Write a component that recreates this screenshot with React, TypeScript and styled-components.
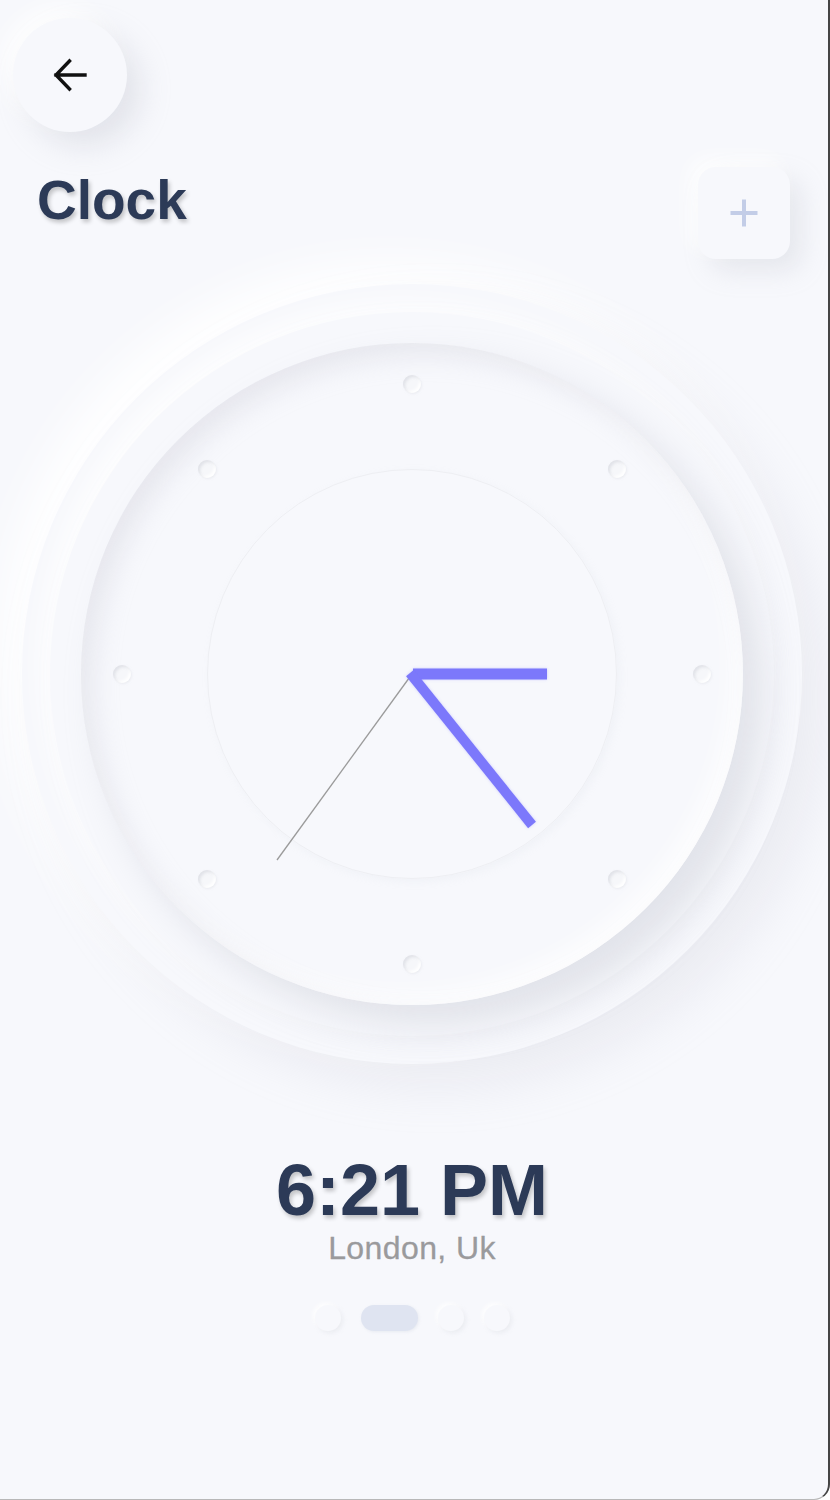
import React from 'react'
import styled, { createGlobalStyle } from 'styled-components'

const GlobalStyle = createGlobalStyle`
  html, body {
    margin: 0;
    padding: 0;
    background: #ffffff;
  }
  * {
    box-sizing: border-box;
  }
`

const FACE = 662
const CENTER = FACE / 2
const TICK_RADIUS = 290
const TICK_SIZE = 18

const Screen = styled.div`
  width: 830px;
  height: 1500px;
  background: #f7f8fc;
  border-right: 2px solid #454545;
  border-bottom: 1px solid #b8b8b8;
  border-bottom-right-radius: 16px;
  display: flex;
  flex-direction: column;
  overflow: hidden;
  font-family: 'Liberation Sans', Arial, sans-serif;
`

const Header = styled.div`
  padding: 18px 0 0 13px;
`

const BackButton = styled.button`
  width: 114px;
  height: 114px;
  border: none;
  border-radius: 50%;
  background: #f7f8fc;
  display: flex;
  align-items: center;
  justify-content: center;
  padding: 0;
  box-shadow: 14px 14px 30px rgba(180, 182, 195, 0.3),
    -10px -10px 24px rgba(255, 255, 255, 0.9);
`

const TitleRow = styled.div`
  margin-top: 35px;
  display: flex;
  justify-content: space-between;
  align-items: flex-start;
  padding: 0 38px 0 37px;
`

const Title = styled.h1`
  margin: 6px 0 0;
  font-size: 55px;
  line-height: 1;
  font-weight: 700;
  color: #2c3a57;
  text-shadow: 2px 3px 4px rgba(0, 0, 0, 0.22);
`

const AddButton = styled.button`
  width: 92px;
  height: 92px;
  border: none;
  border-radius: 18px;
  background: #f7f8fc;
  display: flex;
  align-items: center;
  justify-content: center;
  padding: 0;
  box-shadow: 12px 12px 26px rgba(180, 182, 195, 0.25),
    -8px -8px 20px rgba(255, 255, 255, 0.9);
`

const ClockStage = styled.div`
  margin-top: 25px;
  padding-right: 4px;
  display: flex;
  justify-content: center;
`

const OuterDisc = styled.div`
  width: 780px;
  height: 780px;
  border-radius: 50%;
  display: flex;
  align-items: center;
  justify-content: center;
  background: #f7f8fc;
  box-shadow: 24px 24px 48px rgba(190, 192, 205, 0.2),
    -22px -22px 46px rgba(255, 255, 255, 0.95);
`

const MidRing = styled.div`
  width: 724px;
  height: 724px;
  border-radius: 50%;
  display: flex;
  align-items: center;
  justify-content: center;
  background: #f7f8fc;
  box-shadow: 8px 8px 24px rgba(190, 192, 205, 0.08),
    -10px -10px 24px rgba(255, 255, 255, 0.8);
`

const Face = styled.div`
  position: relative;
  width: ${FACE}px;
  height: ${FACE}px;
  border-radius: 50%;
  display: flex;
  align-items: center;
  justify-content: center;
  background: #f7f8fc;
  box-shadow: 20px 20px 36px rgba(175, 178, 192, 0.3),
    inset 12px 12px 26px rgba(190, 192, 205, 0.28),
    inset -10px -10px 24px rgba(255, 255, 255, 0.85);
`

const InnerRing = styled.div`
  width: 410px;
  height: 410px;
  border-radius: 50%;
  border: 1.5px solid #eeeff3;
  box-shadow: 3px 3px 8px rgba(200, 202, 212, 0.12);
`

const Tick = styled.span<{ $x: number; $y: number }>`
  position: absolute;
  left: ${({ $x }) => $x}px;
  top: ${({ $y }) => $y}px;
  width: ${TICK_SIZE}px;
  height: ${TICK_SIZE}px;
  border-radius: 50%;
  background: #f6f7fa;
  box-shadow: inset 2px 2px 3px rgba(200, 202, 210, 0.45),
    inset -2px -2px 3px rgba(255, 255, 255, 0.95),
    1px 1px 2px rgba(225, 227, 234, 0.5);
`

const Hands = styled.svg`
  position: absolute;
  inset: 0;
  overflow: visible;
`

const TimeBlock = styled.div`
  margin-top: 90px;
  padding-right: 4px;
  display: flex;
  flex-direction: column;
  align-items: center;
`

const TimeText = styled.div`
  font-size: 72px;
  line-height: 1;
  font-weight: 700;
  color: #2c3a57;
  text-shadow: 2px 3px 4px rgba(0, 0, 0, 0.22);
`

const CityText = styled.div`
  margin-top: 6px;
  font-size: 32px;
  line-height: 1;
  letter-spacing: 0.4px;
  color: #9a9a9c;
  -webkit-text-stroke: 0.3px #9a9a9c;
`

const Pager = styled.div`
  margin-top: 41px;
  display: flex;
  gap: 20px;
`

const PageDot = styled.span<{ $active?: boolean }>`
  width: ${({ $active }) => ($active ? 57 : 26)}px;
  height: 26px;
  border-radius: 13px;
  background: ${({ $active }) => ($active ? '#dfe4f1' : '#f7f8fc')};
  box-shadow: ${({ $active }) =>
    $active
      ? '1px 1px 3px rgba(200, 204, 218, 0.3)'
      : '2px 2px 4px rgba(205, 207, 216, 0.28), -2px -2px 4px rgba(255, 255, 255, 0.9)'};
`

const ticks = Array.from({ length: 8 }, (_, i) => {
  const angle = (i * Math.PI) / 4
  return {
    x: CENTER + TICK_RADIUS * Math.sin(angle) - TICK_SIZE / 2,
    y: CENTER - TICK_RADIUS * Math.cos(angle) - TICK_SIZE / 2,
  }
})

export default function App() {
  return (
    <>
      <GlobalStyle />
      <Screen>
        <Header>
          <BackButton aria-label="Back">
            <svg width="34" height="34" viewBox="0 0 34 34" fill="none">
              <path
                d="M32 17H3M16.5 3L3 17l13.5 14"
                stroke="#111"
                strokeWidth="3.4"
                strokeLinecap="square"
                strokeLinejoin="miter"
              />
            </svg>
          </BackButton>
        </Header>

        <TitleRow>
          <Title>Clock</Title>
          <AddButton aria-label="Add">
            <svg width="30" height="30" viewBox="0 0 30 30" fill="none">
              <path d="M15 1.5v27M1.5 15h27" stroke="#c3cde7" strokeWidth="4" />
            </svg>
          </AddButton>
        </TitleRow>

        <ClockStage>
          <OuterDisc>
            <MidRing>
              <Face>
                <InnerRing />
                {ticks.map((t, i) => (
                  <Tick key={i} $x={t.x} $y={t.y} />
                ))}
                <Hands width={FACE} height={FACE} viewBox={`0 0 ${FACE} ${FACE}`}>
                  <defs>
                    <filter id="handGlow" x="-20%" y="-20%" width="140%" height="140%">
                      <feDropShadow dx="0" dy="0" stdDeviation="1.5" floodColor="#7b78fb" floodOpacity="0.35" />
                    </filter>
                  </defs>
                  <line
                    x1={CENTER}
                    y1={CENTER}
                    x2={CENTER - 135}
                    y2={CENTER + 186}
                    stroke="#9b9b9b"
                    strokeWidth="1.3"
                  />
                  <g filter="url(#handGlow)">
                    <line
                      x1={CENTER + 1}
                      y1={CENTER}
                      x2={CENTER + 135}
                      y2={CENTER}
                      stroke="#7b78fb"
                      strokeWidth="11"
                    />
                    <line
                      x1={CENTER - 2}
                      y1={CENTER - 1}
                      x2={CENTER + 120}
                      y2={CENTER + 151}
                      stroke="#7b78fb"
                      strokeWidth="10"
                    />
                  </g>
                </Hands>
              </Face>
            </MidRing>
          </OuterDisc>
        </ClockStage>

        <TimeBlock>
          <TimeText>6:21 PM</TimeText>
          <CityText>London, Uk</CityText>
          <Pager>
            <PageDot />
            <PageDot $active />
            <PageDot />
            <PageDot />
          </Pager>
        </TimeBlock>
      </Screen>
    </>
  )
}
